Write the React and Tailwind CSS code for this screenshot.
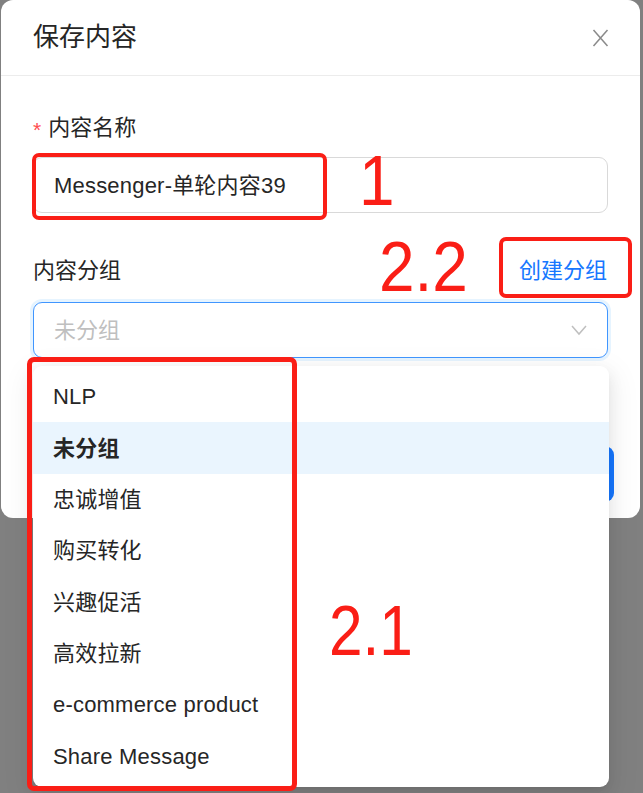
import React from "react";

const items = ["NLP", "未分组", "忠诚增值", "购买转化", "兴趣促活", "高效拉新", "e-commerce product", "Share Message"];

export default function App() {
  return (
    <div
      className="relative w-[643px] h-[793px] overflow-hidden bg-[#808080]"
      style={{ fontFamily: '"Liberation Sans", "Noto Sans CJK SC", sans-serif' }}
    >
      {/* Modal */}
      <div className="ml-[1px] w-[639px] h-[518px] rounded-[12px] bg-white flex flex-col">
        <div className="h-[76px] shrink-0 flex items-center justify-between pl-[32px] pr-[31px] border-b border-[#ececec]">
          <span className="text-[26px] text-[#262626]">保存内容</span>
          <svg width="17" height="18" viewBox="0 0 17 18">
            <path d="M1.5 1 L15.5 17 M15.5 1 L1.5 17" stroke="#8a8a8a" strokeWidth="1.5" fill="none" />
          </svg>
        </div>
        <div className="px-[32px] pt-[35px]">
          <div className="h-[33px] flex items-center text-[22px] text-[#262626]">
            <span className="text-[#ff4d4f] text-[21px] mr-[7px] mt-[4px]">*</span>
            <span>内容名称</span>
          </div>
          <div className="mt-[13px] h-[56px] rounded-[9px] border border-[#d9d9d9] flex items-center pl-[20px] text-[22px] tracking-[0.2px] text-[#262626]">
            Messenger-单轮内容39
          </div>
          <div className="mt-[41px] h-[33px] flex items-center justify-between text-[22px]">
            <span className="text-[#262626]">内容分组</span>
            <span className="text-[#1677ff] mr-[1px]">创建分组</span>
          </div>
          <div className="mt-[15px] h-[56px] rounded-[9px] border border-[#4096ff] shadow-[0_0_0_3px_rgba(5,145,255,0.1)] flex items-center justify-between pl-[20px] pr-[20px] text-[22px]">
            <span className="text-[#bfbfbf]">未分组</span>
            <svg width="16" height="12" viewBox="0 0 16 12">
              <path d="M1 2 L8 10 L15 2" stroke="#bfbfbf" strokeWidth="1.5" fill="none" />
            </svg>
          </div>
          <div className="mt-[88px] flex justify-end gap-[12px] mr-[-6px]">
            <div className="h-[56px] w-[100px] rounded-[9px] border border-[#d9d9d9] bg-white" />
            <div className="h-[56px] w-[100px] rounded-[9px] bg-[#1677ff]" />
          </div>
        </div>
      </div>

      {/* Dropdown */}
      <div className="absolute left-[33px] top-[366px] w-[576px] h-[421px] rounded-[9px] bg-white shadow-[0_6px_16px_0_rgba(0,0,0,0.08),0_3px_6px_-4px_rgba(0,0,0,0.12),0_9px_28px_8px_rgba(0,0,0,0.05)] py-[5px] flex flex-col">
        {items.map((it, i) => (
          <div
            key={it}
            className={
              "h-[51.4px] flex items-center pl-[20px] text-[22px] tracking-[0.2px] text-[#262626] " +
              (i === 1 ? "bg-[#eaf5fe] font-bold" : "")
            }
          >
            {it}
          </div>
        ))}
      </div>

      {/* Annotations */}
      <div className="absolute left-[32px] top-[153px] w-[295px] h-[67px] rounded-[7px] border-[4px] border-[#fa1e16]" />
      <div className="absolute left-[499px] top-[237px] w-[133px] h-[61px] rounded-[7px] border-[4px] border-[#fa1e16]" />
      <div className="absolute left-[27px] top-[357px] w-[270px] h-[434px] rounded-[7px] border-[5px] border-[#fa1e16]" />

      <div className="absolute left-[359px] top-[141px] text-[71px] leading-[80px] text-[#fa1e16] scale-x-90 origin-left">1</div>
      <div className="absolute left-[379px] top-[227px] text-[71px] leading-[80px] text-[#fa1e16] scale-x-90 origin-left">2.2</div>
      <div className="absolute left-[329px] top-[591px] text-[71px] leading-[80px] text-[#fa1e16] scale-x-[0.85] origin-left">2.1</div>
    </div>
  );
}
